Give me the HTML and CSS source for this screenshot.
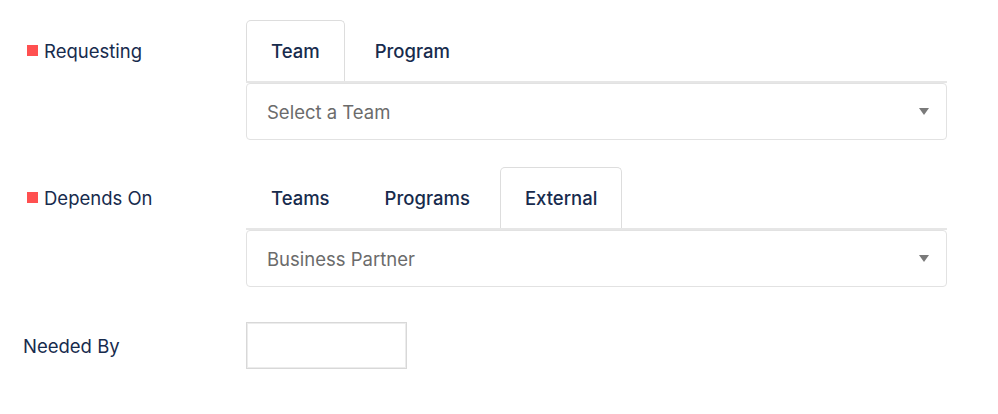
FILE: index.html
```html
<!DOCTYPE html>
<html>
<head>
<meta charset="utf-8">
<link rel="stylesheet" href="styles.css">
</head>
<body>
<div class="form">
  <div class="row">
    <div class="label-cell"><span class="req"></span><span class="label">Requesting</span></div>
    <div class="control">
      <div class="tabs">
        <div class="tab active">Team</div>
        <div class="tab">Program</div>
      </div>
      <div class="select"><span class="placeholder">Select a Team</span><span class="caret"></span></div>
    </div>
  </div>
  <div class="row">
    <div class="label-cell"><span class="req"></span><span class="label">Depends On</span></div>
    <div class="control">
      <div class="tabs">
        <div class="tab">Teams</div>
        <div class="tab">Programs</div>
        <div class="tab active">External</div>
      </div>
      <div class="select"><span class="placeholder">Business Partner</span><span class="caret"></span></div>
    </div>
  </div>
  <div class="row row-date">
    <div class="label-cell plain"><span class="label">Needed By</span></div>
    <div class="control">
      <div class="date-input"></div>
    </div>
  </div>
</div>
</body>
</html>
```
FILE: styles.css
```css
html, body {
  margin: 0;
  padding: 0;
  background: #ffffff;
}
body {
  font-family: Inter, "Liberation Sans", sans-serif;
  color: #172b4d;
  font-size: 18.5px;
}
.form {
  padding-top: 20px;
  display: flex;
  flex-direction: column;
  gap: 27px;
}
.row {
  display: grid;
  grid-template-columns: 246px 701px;
  align-items: start;
}
.row-date {
  margin-top: 8px;
  align-items: center;
}
.label-cell {
  height: 61px;
  display: flex;
  align-items: center;
  padding-left: 27px;
}
.label-cell.plain {
  padding-left: 23px;
  height: 47px;
}
.req {
  width: 11px;
  height: 11px;
  background: #ff5050;
  margin-right: 6px;
  flex: none;
}
.label {
  line-height: 22px;
}
.tabs {
  display: flex;
  gap: 5px;
  height: 61px;
  border-bottom: 2px solid #e6e6e6;
  align-items: stretch;
}
.tab {
  display: flex;
  align-items: center;
  padding: 0 24px;
  border: 1px solid transparent;
  border-bottom: none;
  border-radius: 5px 5px 0 0;
  font-weight: 500;
  color: #172b4d;
}
.tab.active {
  border-color: #dddddd;
}
.select {
  height: 55px;
  border: 1px solid #e2e2e2;
  border-radius: 4px;
  display: flex;
  align-items: center;
  justify-content: space-between;
  padding: 0 17px 0 20px;
}
.placeholder {
  color: #6b6b6b;
}
.caret {
  width: 0;
  height: 0;
  border-left: 5px solid transparent;
  border-right: 5px solid transparent;
  border-top: 7px solid #7a7a7a;
}
.date-input {
  width: 159px;
  height: 45px;
  border: 1px solid #d8d8d8;
  box-shadow: inset 0 0 0 1px #ececec;
}
```
